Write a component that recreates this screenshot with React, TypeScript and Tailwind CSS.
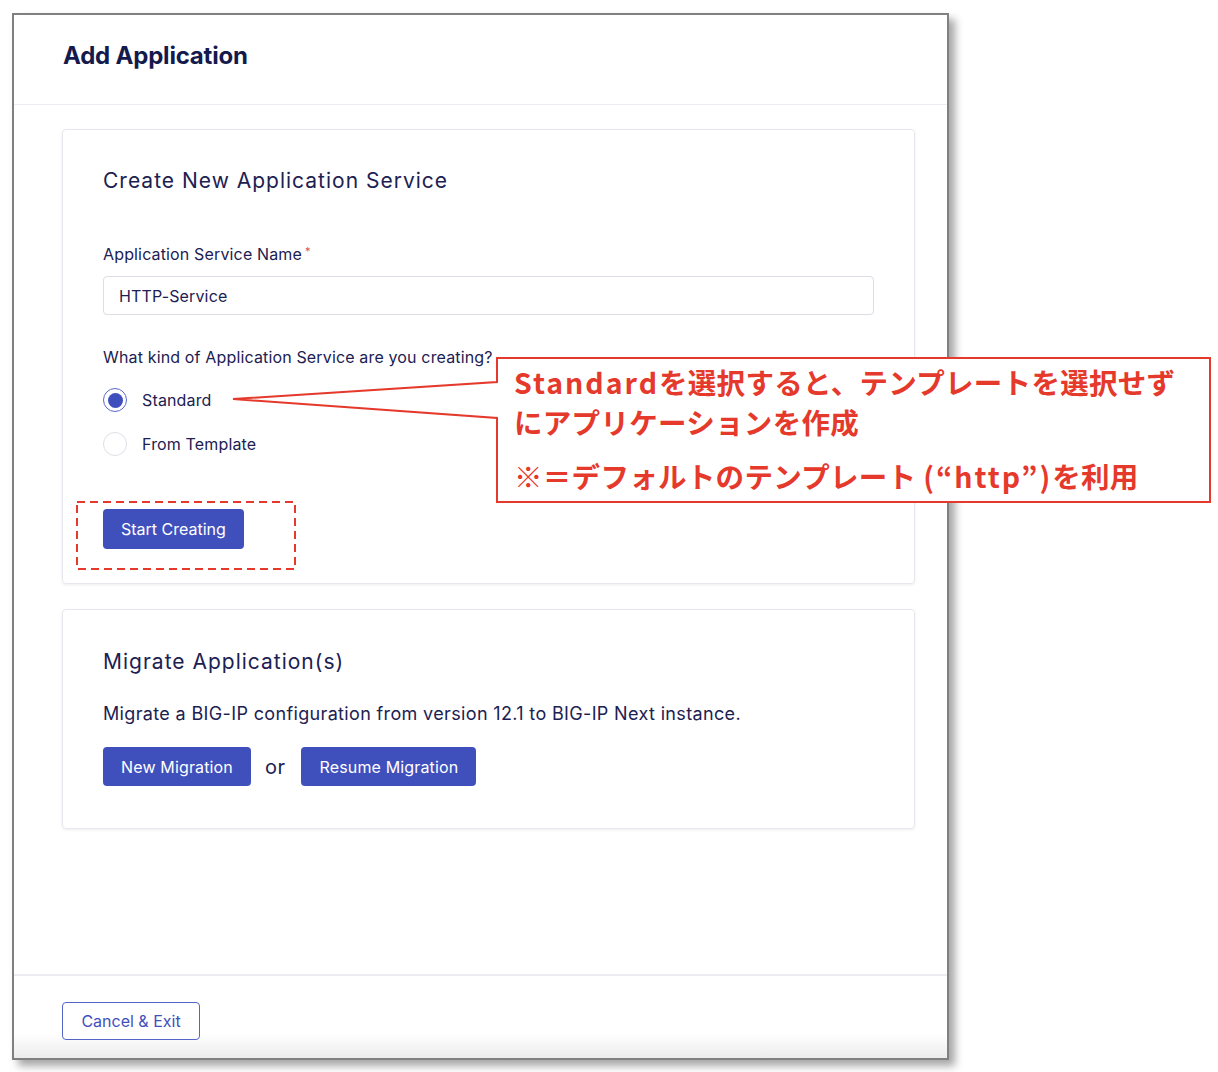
import { useState } from 'react';

const ui = { fontFamily: 'Inter, "Liberation Sans", Arial, sans-serif' };
const jp = { fontFamily: '"Noto Sans CJK JP", "Noto Sans", sans-serif' };

type Kind = 'standard' | 'template';

function Radio({
  checked,
  label,
  onSelect,
}: {
  checked: boolean;
  label: string;
  onSelect: () => void;
}) {
  return (
    <button type="button" onClick={onSelect} className="flex items-center gap-[15px] text-left">
      <span
        className={
          checked
            ? 'flex h-6 w-6 items-center justify-center rounded-full border border-[#5a68c9] bg-white'
            : 'flex h-6 w-6 items-center justify-center rounded-full border border-[#dedfe6] bg-white'
        }
      >
        {checked && <span className="h-[15px] w-[15px] rounded-full bg-[#3f50bd]" />}
      </span>
      <span className="text-[16px] leading-6 tracking-[0.15px] text-[#1c2152]">{label}</span>
    </button>
  );
}

function Callout() {
  return (
    <>
      <svg
        className="pointer-events-none absolute left-0 top-0"
        width="1218"
        height="1072"
        viewBox="0 0 1218 1072"
      >
        <path
          d="M497 358 H1210 V502 H497 V418 L233 399 L497 382 Z"
          fill="white"
          stroke="#e5392c"
          strokeWidth="2"
        />
        <rect
          x="77"
          y="502"
          width="218"
          height="67"
          fill="none"
          stroke="#e5392c"
          strokeWidth="2"
          strokeDasharray="8 5"
        />
      </svg>
      <div
        style={jp}
        className="pointer-events-none absolute left-[514px] top-[362px] text-[28.5px] font-bold leading-[40px] tracking-[0.3px] text-[#e5392c]"
      >
        <p>
          <span className="tracking-[2px]">Standard</span>を選択すると、テンプレートを選択せず
        </p>
        <p>にアプリケーションを作成</p>
        <p className="mt-[14px]">
          ※＝デフォルトのテンプレート <span className="tracking-[2px]">(“http”)</span>を利用
        </p>
      </div>
    </>
  );
}

export default function App() {
  const [name, setName] = useState('HTTP-Service');
  const [kind, setKind] = useState<Kind>('standard');

  return (
    <div style={ui} className="relative h-[1072px] w-[1218px] overflow-hidden bg-white">
      <div className="ml-[12px] mt-[13px] flex h-[1047px] w-[937px] flex-col border-2 border-[#808080] bg-white shadow-[6px_6px_8px_rgba(0,0,0,0.35)]">
        <header className="flex h-[90px] shrink-0 items-center border-b border-[#ecedf3] pb-[7px] pl-[49px]">
          <h1 className="text-[24px] font-bold tracking-[-0.2px] text-[#151a4d]">Add Application</h1>
        </header>

        <main className="flex-1 pl-[48px] pr-[32px] pt-[24px]">
          <section className="rounded-[4px] border border-[#e7e8ee] px-[40px] pb-[34px] pt-[37px] shadow-[0_1px_3px_rgba(20,20,60,0.08)]">
            <h2 className="text-[21px] leading-7 tracking-[1px] text-[#1c2152]">
              Create New Application Service
            </h2>

            <label className="mt-[47px] block text-[16px] leading-6 tracking-[0.15px] text-[#1c2152]">
              Application Service Name
              <span className="relative top-[-5px] ml-[3px] text-[11px] text-[#e0533f]">*</span>
            </label>
            <input
              value={name}
              onChange={(event) => setName(event.target.value)}
              className="mt-[8px] block h-[39px] w-full rounded-[4px] border border-[#dcdde5] px-[15px] text-[16px] tracking-[0.15px] text-[#1c2152] outline-none"
            />

            <p className="mt-[30px] text-[16px] leading-6 tracking-[0.15px] text-[#1c2152]">
              What kind of Application Service are you creating?
            </p>
            <div className="mt-[19px] flex flex-col gap-[20px]">
              <Radio checked={kind === 'standard'} label="Standard" onSelect={() => setKind('standard')} />
              <Radio checked={kind === 'template'} label="From Template" onSelect={() => setKind('template')} />
            </div>

            <button
              type="button"
              className="mt-[53px] h-[40px] rounded-[4px] bg-[#3f50bd] px-[18px] text-[16px] text-white"
            >
              Start Creating
            </button>
          </section>

          <section className="mt-[25px] rounded-[4px] border border-[#e7e8ee] px-[40px] pb-[42px] pt-[38px] shadow-[0_1px_3px_rgba(20,20,60,0.08)]">
            <h2 className="text-[21px] leading-7 tracking-[1px] text-[#1c2152]">Migrate Application(s)</h2>
            <p className="mt-[25px] text-[18px] leading-[26px] tracking-[0.35px] text-[#1c2152]">
              Migrate a BIG-IP configuration from version 12.1 to BIG-IP Next instance.
            </p>
            <div className="mt-[20px] flex items-center">
              <button
                type="button"
                className="h-[39px] rounded-[4px] bg-[#3f50bd] px-[18px] text-[16px] tracking-[0.15px] text-white"
              >
                New Migration
              </button>
              <span className="ml-[14px] mr-[16px] text-[20px] tracking-[0.5px] text-[#1c2152]">or</span>
              <button
                type="button"
                className="h-[39px] rounded-[4px] bg-[#3f50bd] px-[18px] text-[16px] tracking-[0.15px] text-white"
              >
                Resume Migration
              </button>
            </div>
          </section>
        </main>

        <footer className="h-[84px] shrink-0 border-t-2 border-[#ecedf3] bg-[linear-gradient(to_bottom,#ffffff_70%,#ececec_100%)] pl-[48px] pt-[26px]">
          <button
            type="button"
            className="h-[38px] w-[138px] rounded-[4px] border border-[#5564c8] bg-white text-[16px] text-[#3f50bd]"
          >
            Cancel &amp; Exit
          </button>
        </footer>
      </div>

      <Callout />
    </div>
  );
}
